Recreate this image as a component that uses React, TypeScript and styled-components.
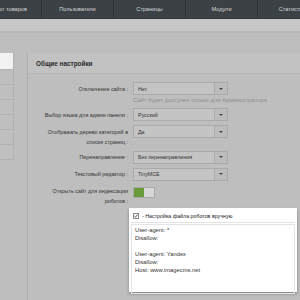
import React from 'react'
import styled, { createGlobalStyle } from 'styled-components'

const GlobalStyle = createGlobalStyle`
  html, body {
    margin: 0;
    padding: 0;
    width: 300px;
    height: 300px;
    overflow: hidden;
    background: #bebebe;
    font-family: 'Liberation Sans', Arial, sans-serif;
  }
`

const Page = styled.div`
  width: 300px;
  height: 300px;
  overflow: hidden;
  background: #bebebe;
`

const Nav = styled.div`
  height: 19px;
  background: #3c4145;
  display: flex;
  margin-left: -30px;
  border-bottom: 1px solid #33373a;
  box-sizing: border-box;
`

const NavItem = styled.div`
  flex: 0 0 72px;
  display: flex;
  align-items: center;
  justify-content: center;
  color: #d6d8d9;
  font-size: 5.6px;
  white-space: nowrap;
  border-right: 1px solid #2f3336;
  box-sizing: border-box;
`

const SubBar = styled.div`
  height: 12px;
  background: #c7c7c7;
  border-bottom: 2px solid #b6b6b6;
`

const Main = styled.div`
  display: flex;
  align-items: flex-start;
  gap: 13px;
  padding-top: 20px;
`

const Sidebar = styled.div`
  flex: 0 0 14px;
  display: flex;
  flex-direction: column;
`

const SideItem = styled.div<{ active?: boolean }>`
  height: ${(p) => (p.active ? 16 : 14)}px;
  background: ${(p) => (p.active ? '#f2f2f2' : '#bfbfbf')};
  border: 1px solid #b1b1b1;
  border-top: none;
  border-left: none;
`

const Panel = styled.div`
  flex: 1;
  min-width: 0;
  border-left: 1px solid #afafaf;
  min-height: 260px;
`

const PanelHeader = styled.div`
  height: 20px;
  display: flex;
  align-items: center;
  padding-left: 8px;
  background: #c2c2c2;
  border-bottom: 1px solid #b5b5b5;
  font-size: 6.4px;
  font-weight: bold;
  color: #2a2a2a;
`

const Form = styled.div`
  display: grid;
  grid-template-columns: 100px 1fr;
  column-gap: 5px;
  row-gap: 4px;
  padding-top: 8px;
`

const Label = styled.div`
  text-align: right;
  font-size: 5.4px;
  line-height: 10px;
  padding-top: 1.5px;
  color: #333;
  white-space: nowrap;
`

const Field = styled.div`
  display: flex;
  flex-direction: column;
`

const Select = styled.div`
  width: 95px;
  height: 13px;
  box-sizing: border-box;
  border: 1px solid #aaaaaa;
  background: #c4c4c4;
  display: flex;
  align-items: center;
  font-size: 5.3px;
  color: #333;
`

const SelectText = styled.div`
  flex: 1;
  padding-left: 4px;
  white-space: nowrap;
`

const Arrow = styled.div`
  width: 12px;
  height: 100%;
  border-left: 1px solid #acacac;
  background: #bcbcbc;
  display: flex;
  align-items: center;
  justify-content: center;
  &::after {
    content: '';
    border-left: 2px solid transparent;
    border-right: 2px solid transparent;
    border-top: 2px solid #444;
  }
`

const Hint = styled.div`
  font-size: 5.8px;
  line-height: 7px;
  color: #8e8e8e;
  margin-top: 2px;
  white-space: nowrap;
`

const Toggle = styled.div`
  width: 20px;
  height: 9px;
  margin-top: 2px;
  display: flex;
  border: 1px solid #a9a9a9;
`

const ToggleHalf = styled.div<{ on?: boolean }>`
  flex: 1;
  background: ${(p) => (p.on ? '#6a9b3b' : '#d6d6d6')};
`

const RobotsBox = styled.div`
  margin-left: -4px;
  margin-top: -2px;
  width: 168px;
  height: 84px;
  background: #ffffff;
  box-shadow: 0 2px 3px rgba(0, 0, 0, 0.3);
  padding: 2px;
  box-sizing: border-box;
`

const CheckRow = styled.div`
  display: flex;
  align-items: center;
  gap: 3px;
  height: 12px;
  padding-left: 2px;
  border-bottom: 1px solid #e2e2e2;
  font-size: 5.3px;
  color: #222;
`

const Check = styled.div`
  width: 6px;
  height: 6px;
  border: 1px solid #888;
  box-sizing: border-box;
  display: flex;
  align-items: center;
  justify-content: center;
  svg {
    display: block;
  }
`

const Textarea = styled.div`
  margin-top: 1px;
  height: 66px;
  border: 1px solid #e4e4e4;
  padding: 1px 3px;
  font-size: 5.8px;
  line-height: 8px;
  color: #333;
  white-space: pre;
`

const navItems = ['Каталог товаров', 'Пользователи', 'Страницы', 'Модули', 'Статистика']

const robots = `User-agent: *
Disallow:

User-agent: Yandex
Disallow:
Host: www.imagecms.net`

const SelectBox = ({ value }: { value: string }) => (
  <Select>
    <SelectText>{value}</SelectText>
    <Arrow />
  </Select>
)

const App = () => {
  return (
    <Page>
      <GlobalStyle />
      <Nav>
        {navItems.map((n) => (
          <NavItem key={n}>{n}</NavItem>
        ))}
      </Nav>
      <SubBar />
      <Main>
        <Sidebar>
          <SideItem active />
          <SideItem />
          <SideItem />
          <SideItem />
          <SideItem />
          <SideItem />
          <SideItem />
        </Sidebar>
        <Panel>
          <PanelHeader>Общие настройки</PanelHeader>
          <Form>
            <Label>Отключение сайта :</Label>
            <Field>
              <SelectBox value="Нет" />
              <Hint>Сайт будет доступен только для Администратора</Hint>
            </Field>
            <Label>Выбор языка для админ панели :</Label>
            <Field>
              <SelectBox value="Русский" />
            </Field>
            <Label>
              Отображать дерево категорий в
              <br />
              списке страниц :
            </Label>
            <Field>
              <SelectBox value="Да" />
            </Field>
            <Label>Перенаправление :</Label>
            <Field>
              <SelectBox value="Без перенаправления" />
            </Field>
            <Label>Текстовый редактор :</Label>
            <Field>
              <SelectBox value="TinyMCE" />
            </Field>
            <Label>
              Открыть сайт для индексации
              <br />
              роботов :
            </Label>
            <Field>
              <Toggle>
                <ToggleHalf on />
                <ToggleHalf />
              </Toggle>
            </Field>
            <div />
            <Field>
              <RobotsBox>
                <CheckRow>
                  <Check>
                    <svg width="6" height="6" viewBox="0 0 6 6">
                      <path d="M0.8 3.2 L2.3 4.6 L5.3 0.9" fill="none" stroke="#111" strokeWidth="1.1" />
                    </svg>
                  </Check>
                  <span>- Настройка файла роботов вручную</span>
                </CheckRow>
                <Textarea>{robots}</Textarea>
              </RobotsBox>
            </Field>
          </Form>
        </Panel>
      </Main>
    </Page>
  )
}

export default App
